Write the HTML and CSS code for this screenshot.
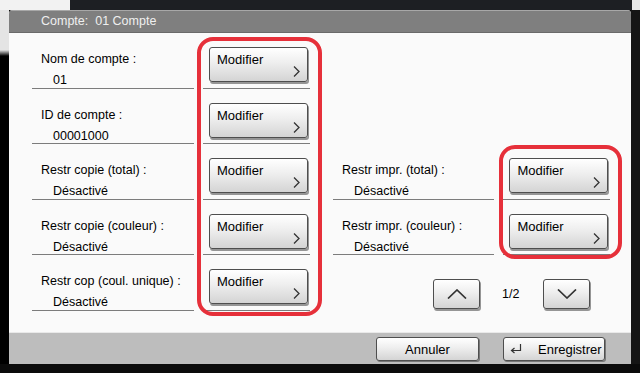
FILE: index.html
```html
<!doctype html>
<html>
<head>
	<meta charset="utf-8">
	<link rel="stylesheet" href="styles.css">
</head>
<body>
<div class="screen">
	<div class="top"><span class="top-light"></span><span class="top-dark"></span><span class="top-corner"></span></div>
	<div class="middle">
		<div class="edge-left"></div>
		<div class="window">
			<div class="title">Compte:&nbsp; 01 Compte</div>
			<div class="content">
				<div class="col">
					<div class="row">
						<div class="field"><div class="label">Nom de compte :</div><div class="value">01</div></div>
						<div class="cell"><button class="btn">Modifier<svg class="chev" viewBox="0 0 7 11"><path d="M1 0.5 L6 5.5 L1 10.5"/></svg></button></div>
					</div>
					<div class="row">
						<div class="field"><div class="label">ID de compte :</div><div class="value">00001000</div></div>
						<div class="cell"><button class="btn">Modifier<svg class="chev" viewBox="0 0 7 11"><path d="M1 0.5 L6 5.5 L1 10.5"/></svg></button></div>
					</div>
					<div class="row">
						<div class="field"><div class="label">Restr copie (total) :</div><div class="value">Désactivé</div></div>
						<div class="cell"><button class="btn">Modifier<svg class="chev" viewBox="0 0 7 11"><path d="M1 0.5 L6 5.5 L1 10.5"/></svg></button></div>
					</div>
					<div class="row">
						<div class="field"><div class="label">Restr copie (couleur) :</div><div class="value">Désactivé</div></div>
						<div class="cell"><button class="btn">Modifier<svg class="chev" viewBox="0 0 7 11"><path d="M1 0.5 L6 5.5 L1 10.5"/></svg></button></div>
					</div>
					<div class="row">
						<div class="field"><div class="label">Restr cop (coul. unique) :</div><div class="value">Désactivé</div></div>
						<div class="cell"><button class="btn">Modifier<svg class="chev" viewBox="0 0 7 11"><path d="M1 0.5 L6 5.5 L1 10.5"/></svg></button></div>
					</div>
				</div>
				<div class="col">
					<div class="row empty"></div>
					<div class="row empty"></div>
					<div class="row">
						<div class="field"><div class="label">Restr impr. (total) :</div><div class="value">Désactivé</div></div>
						<div class="cell"><button class="btn">Modifier<svg class="chev" viewBox="0 0 7 11"><path d="M1 0.5 L6 5.5 L1 10.5"/></svg></button></div>
					</div>
					<div class="row">
						<div class="field"><div class="label">Restr impr. (couleur) :</div><div class="value">Désactivé</div></div>
						<div class="cell"><button class="btn">Modifier<svg class="chev" viewBox="0 0 7 11"><path d="M1 0.5 L6 5.5 L1 10.5"/></svg></button></div>
					</div>
					<div class="row pager">
						<button class="btn page-btn"><svg viewBox="0 0 20 10"><path d="M1 9.5 L10 1 L19 9.5"/></svg></button>
						<span class="page-num">1/2</span>
						<button class="btn page-btn"><svg viewBox="0 0 20 10"><path d="M1 0.5 L10 9 L19 0.5"/></svg></button>
					</div>
				</div>
				<div class="mark mark-left"></div>
				<div class="mark mark-right"></div>
			</div>
			<div class="footer">
				<button class="btn foot-btn">Annuler</button>
				<button class="btn foot-btn"><svg class="enter" viewBox="0 0 12 10"><path d="M10.5 0 V6.5 H2"/><path d="M4.5 4 L1.5 6.5 L4.5 9"/></svg>Enregistrer</button>
			</div>
		</div>
		<div class="edge-right"></div>
	</div>
</div>
</body>
</html>
```
FILE: styles.css
```css
body { margin: 0; background: #0b0b0b; font-family: "Liberation Sans", Arial, sans-serif; color: #000; }
.screen { width: 640px; height: 373px; overflow: hidden; }

.top { display: flex; height: 10px; }
.top-light { width: 70px; background: #f2f2f2; }
.top-dark { flex: 1; background: #1d1f23; }
.top-corner { width: 8px; background: #e8e8e8; }

.middle { display: flex; height: 354px; }
.edge-left { width: 9px; background: linear-gradient(#e4e4e4 0, #e4e4e4 40px, #000 46px); }
.edge-right { width: 9px; background: #151515; }

.window { width: 622px; display: flex; flex-direction: column; background: #fafafa; border-radius: 4px 4px 0 0; overflow: hidden; }
.title { height: 23px; box-sizing: border-box; border-top: 1px solid #a8a8a8; border-bottom: 1px solid #6a6a6a; background: #7f7f7f; color: #efefef; font-size: 12.5px; line-height: 21px; padding-left: 32px; }

.content { position: relative; height: 299px; box-sizing: border-box; padding: 0 21px 0 23px; display: grid; grid-template-columns: 278px 277px; column-gap: 23px; }
.row { display: flex; height: 55.5px; box-sizing: border-box; }
.field { width: 162px; box-sizing: border-box; padding: 19px 0 0 9px; border-bottom: 1px solid #7c7c7c; font-size: 12.5px; line-height: 15px; white-space: nowrap; }
.value { margin-top: 6px; padding-left: 12px; }
.cell { width: 107px; margin-left: 9px; box-sizing: border-box; padding: 14px 0 0 6px; border-bottom: 1px solid #7c7c7c; }

.btn { position: relative; box-sizing: border-box; border: 1px solid #4e4e4e; border-radius: 3px; background: linear-gradient(#ffffff, #eeeeee 45%, #d4d4d4); box-shadow: 1px 2px 0 #959595; font-family: inherit; color: #000; padding: 0; cursor: pointer; }
.cell .btn { display: flex; align-items: flex-start; width: 99px; height: 35px; padding: 4px 0 0 7px; font-size: 13px; line-height: 16px; }
.chev { position: absolute; right: 7px; bottom: 4px; width: 7px; height: 11px; fill: none; stroke: #333; stroke-width: 1.3; }

.pager { align-items: flex-start; padding: 24px 0 0 100px; }
.page-btn { width: 47px; height: 30px; display: flex; align-items: center; justify-content: center; }
.page-btn svg { width: 20px; height: 10px; fill: none; stroke: #333; stroke-width: 1.7; }
.page-num { width: 17px; margin: 0 24px 0 22px; font-size: 12.5px; line-height: 30px; }

.mark { position: absolute; border: 4px solid #e6303a; border-radius: 16px; box-sizing: border-box; pointer-events: none; }
.mark-left { left: 188px; top: 4px; width: 125px; height: 279px; }
.mark-right { left: 490px; top: 112px; width: 123px; height: 114px; }

.footer { height: 32px; box-sizing: border-box; background: #bdbdbd; border-top: 1px solid #e9e9e9; display: flex; justify-content: flex-end; align-items: flex-start; gap: 24px; padding: 4px 26px 0 0; }
.foot-btn { width: 103px; height: 24px; font-size: 13px; display: flex; align-items: center; justify-content: center; box-shadow: 1px 1px 0 #777; }
.foot-btn + .foot-btn { width: 102px; justify-content: flex-start; padding-left: 6px; }
.enter { width: 12px; height: 10px; margin-right: 16px; fill: none; stroke: #333; stroke-width: 1.2; }
```
